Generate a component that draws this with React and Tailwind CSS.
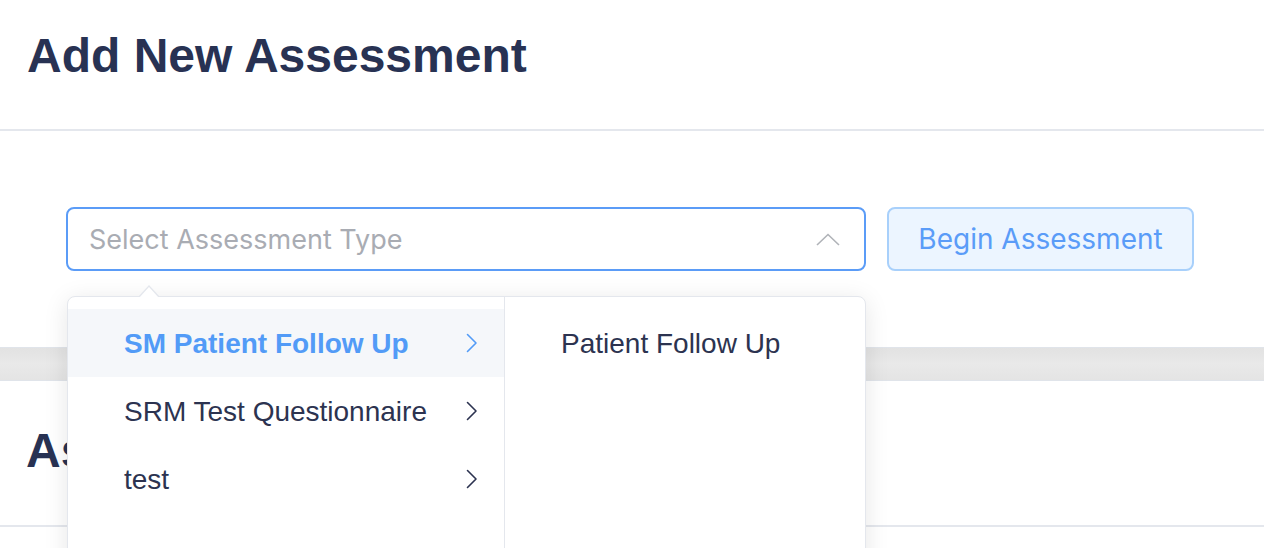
import React from "react";

const Chevron = ({ color }) => (
  <svg width="12" height="20" viewBox="0 0 12 20" fill="none">
    <path d="M1.5 1.5 L10 10 L1.5 18.5" stroke={color} strokeWidth="1.6" strokeLinecap="round" strokeLinejoin="round" />
  </svg>
);

export default function App() {
  const items = [
    { label: "SM Patient Follow Up", active: true },
    { label: "SRM Test Questionnaire" },
    { label: "test" },
  ];
  return (
    <div className="relative w-[1264px] h-[548px] overflow-hidden bg-white" style={{ fontFamily: '"Liberation Sans", Arial, sans-serif' }}>
      {/* Card 1 */}
      <div className="h-[131px] border-b-2 border-[#e4e7ed] pt-[28px] pl-[27px]">
        <h1 className="text-[48px] leading-[56px] font-bold text-[#283253]">Add New Assessment</h1>
      </div>
      <div className="h-[216px] pt-[76px] pl-[66px] flex items-start gap-[21px]">
        <div className="w-[800px] h-[64px] border-2 border-[#5b9cf7] rounded-[8px] flex items-center justify-between pl-[21px] pr-[24px]">
          <span className="text-[27px] text-[#a9acb3] pt-[2px]" style={{ fontFamily: 'Inter, "Noto Sans", sans-serif' }}>Select Assessment Type</span>
          <svg width="24" height="13" viewBox="0 0 24 13" fill="none">
            <path d="M1 12 L12 1.5 L23 12" stroke="#b0b3b8" strokeWidth="1.6" />
          </svg>
        </div>
        <button className="w-[307px] h-[64px] border-2 border-[#a8d0fb] bg-[#ecf5ff] rounded-[8px] text-[28px] text-[#5a9cf8]" style={{ fontFamily: 'Inter, "Noto Sans", sans-serif' }}>
          Begin Assessment
        </button>
      </div>
      {/* Gray gap */}
      <div className="h-[34px] bg-gradient-to-b from-[#e2e2e2] via-[#e9e9e9] to-[#e4e4e4] border-y border-[#e0e4ea]" />
      {/* Card 2 */}
      <div className="h-[146px] border-b-2 border-[#e4e7ed] pt-[42px] pl-[26px]">
        <h2 className="text-[48px] leading-[56px] font-bold text-[#283253]">As</h2>
      </div>

      {/* Dropdown */}
      <div className="absolute left-[67px] top-[296px] w-[799px] h-[300px] bg-white border border-[#e4e7ed] rounded-[8px] shadow-[0_4px_24px_rgba(0,0,0,0.1)] flex">
        <div className="absolute left-[70px] top-[-12px] w-0 h-0 border-x-[11px] border-x-transparent border-b-[12px] border-b-[#e4e7ed]" />
        <div className="absolute left-[71px] top-[-10px] w-0 h-0 border-x-[10px] border-x-transparent border-b-[11px] border-b-white" />
        <div className="w-[437px] border-r border-[#e4e7ed] pt-[12px]">
          {items.map((it) => (
            <div key={it.label} className={`h-[68px] flex items-center justify-between pl-[56px] pr-[26px] ${it.active ? "bg-[#f5f7fa]" : ""}`}>
              <span className={`text-[28px] pt-[2px] ${it.active ? "font-bold text-[#529bf7]" : "text-[#2c3350]"}`}>{it.label}</span>
              <Chevron color={it.active ? "#529bf7" : "#2c3350"} />
            </div>
          ))}
        </div>
        <div className="flex-1 pt-[12px]">
          <div className="h-[68px] flex items-center pl-[56px]">
            <span className="text-[28px] pt-[2px] text-[#2c3350]">Patient Follow Up</span>
          </div>
        </div>
      </div>
    </div>
  );
}
